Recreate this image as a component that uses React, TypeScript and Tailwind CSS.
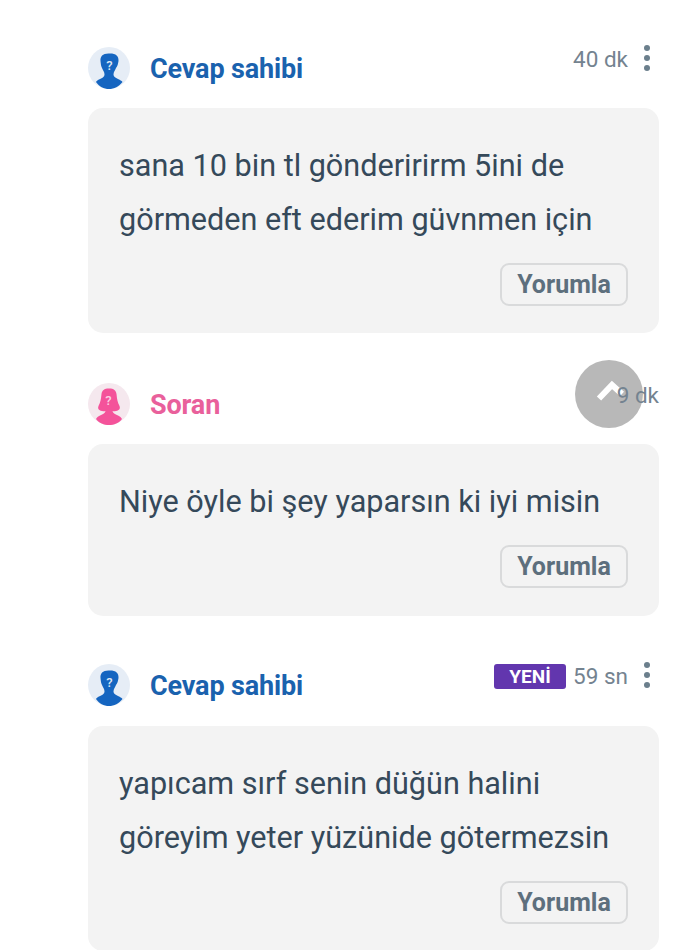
const Male = () => (
  <svg viewBox="0 0 42 42" className="w-[42px] h-[42px] shrink-0">
    <circle cx="21" cy="21" r="21" fill="#e6edf6" />
    <path d="M22 6.500C15 6 12 9 12.500 14C12.800 17 13 19 14 21C15 23.500 16.500 25 16.500 27.500C16.500 30 14 31 11 32.500C9.500 33.300 8.500 34 8 35C11 39.500 16 42 21 42C26 42 31 39.500 34.500 35C33.500 33.800 32 33 30.500 32.300C28 31 25.500 30 25.500 27.500C25.500 25 27 23.500 28 21C29.500 19 30 17 30.500 14C30.800 9 28 6.500 22 6.500Z" fill="#1565c0" />
    <text x="21.500" y="22.500" textAnchor="middle" fontSize="13" fontWeight="500" fill="#dbe6f3" fontFamily="Roboto, sans-serif">?</text>
  </svg>
);

const Female = () => (
  <svg viewBox="0 0 42 42" className="w-[42px] h-[42px] shrink-0">
    <circle cx="21" cy="21" r="21" fill="#f5e8ee" />
    <path d="M21 5.500C16 5.500 14 7.500 13.500 11C13 16 12.500 19 10.500 23C9.500 25.500 10.500 27.500 14 28C15.500 28.300 16.500 28.300 17.500 28C17.500 30 15 31 12 32.500C10 33.500 8.800 34.500 8 36C11 40 16 42 21 42C26 42 31 40 34 36C33.200 34.500 32 33.500 30 32.500C27 31 24.500 30 24.500 28C25.500 28.300 26.500 28.300 28 28C31.500 27.500 32.500 25.500 31.500 23C29.500 19 29 16 28.500 11C28 7.500 26 5.500 21 5.500Z" fill="#f4539a" />
    <text x="20.500" y="22" textAnchor="middle" fontSize="13" fontWeight="500" fill="#fbd0e2" fontFamily="Roboto, sans-serif">?</text>
  </svg>
);

const Dots = () => (
  <div className="flex flex-col gap-[4px] w-[6px] ml-[16px] mr-[9px] mt-[-1px]">
    <span className="w-[6px] h-[6px] rounded-full bg-[#6b7f8c]" />
    <span className="w-[6px] h-[6px] rounded-full bg-[#6b7f8c]" />
    <span className="w-[6px] h-[6px] rounded-full bg-[#6b7f8c]" />
  </div>
);

type Props = {
  female?: boolean;
  name: string;
  time: string;
  isNew?: boolean;
  dots?: boolean;
  lines: string[];
  className?: string;
  cardClass?: string;
};

const Answer = ({ female, name, time, isNew, dots = true, lines, className = "", cardClass = "mt-[19px]" }: Props) => (
  <section className={className}>
    <header className="flex items-center h-[42px]">
      {female ? <Female /> : <Male />}
      <span className={`ml-[20px] pt-[2px] text-[27px] font-bold tracking-[-0.15px] ${female ? "text-[#e9609b]" : "text-[#1a62ae]"}`}>{name}</span>
      <div className="ml-auto flex self-start mt-[-1px]">
        {isNew && (
          <span className="mr-[7px] mt-[1px] w-[72px] h-[25px] rounded-[3px] bg-[#6236ae] text-white text-[19px] font-bold leading-[25px] text-center">YENİ</span>
        )}
        <span className="relative z-10 text-[22.500px] leading-[26px] text-[#748390]">{time}</span>
        {dots && <Dots />}
      </div>
    </header>
    <div className={`${cardClass} bg-[#f3f3f3] rounded-[15px] px-[31px] pt-[31px] pb-[27.500px]`}>
      {lines.map((l) => (
        <p key={l} className="text-[30.600px] leading-[53.500px] text-[#35495a] whitespace-nowrap">{l}</p>
      ))}
      <div className="flex justify-end mt-[16.500px]">
        <button className="w-[128px] h-[43px] rounded-[9px] border-2 border-[#d9dadb] text-[25px] font-bold text-[#5d6f7d] leading-none">Yorumla</button>
      </div>
    </div>
  </section>
);

export default function App() {
  return (
    <div className="relative w-[690px] h-[950px] overflow-hidden bg-white pl-[88px] pr-[31px] pt-[47px] font-['Roboto',sans-serif]">
      <Answer name="Cevap sahibi" time="40 dk" lines={["sana 10 bin tl gönderirirm 5ini de", "görmeden eft ederim güvnmen için"]} />
      <Answer className="mt-[50px]" female name="Soran" time="9 dk" dots={false} lines={["Niye öyle bi şey yaparsın ki iyi misin"]} />
      <Answer className="mt-[48.500px]" cardClass="mt-[20px]" name="Cevap sahibi" time="59 sn" isNew lines={["yapıcam sırf senin düğün halini", "göreyim yeter yüzünide götermezsin"]} />
      <div className="absolute left-[575px] top-[360px] w-[68px] h-[68px] rounded-full bg-[#b8b8b8]">
        <svg viewBox="0 0 68 68" className="w-[68px] h-[68px]">
          <path d="M24 38.500L37 25L47 34" fill="none" stroke="#fff" strokeWidth="6" />
        </svg>
      </div>
    </div>
  );
}
